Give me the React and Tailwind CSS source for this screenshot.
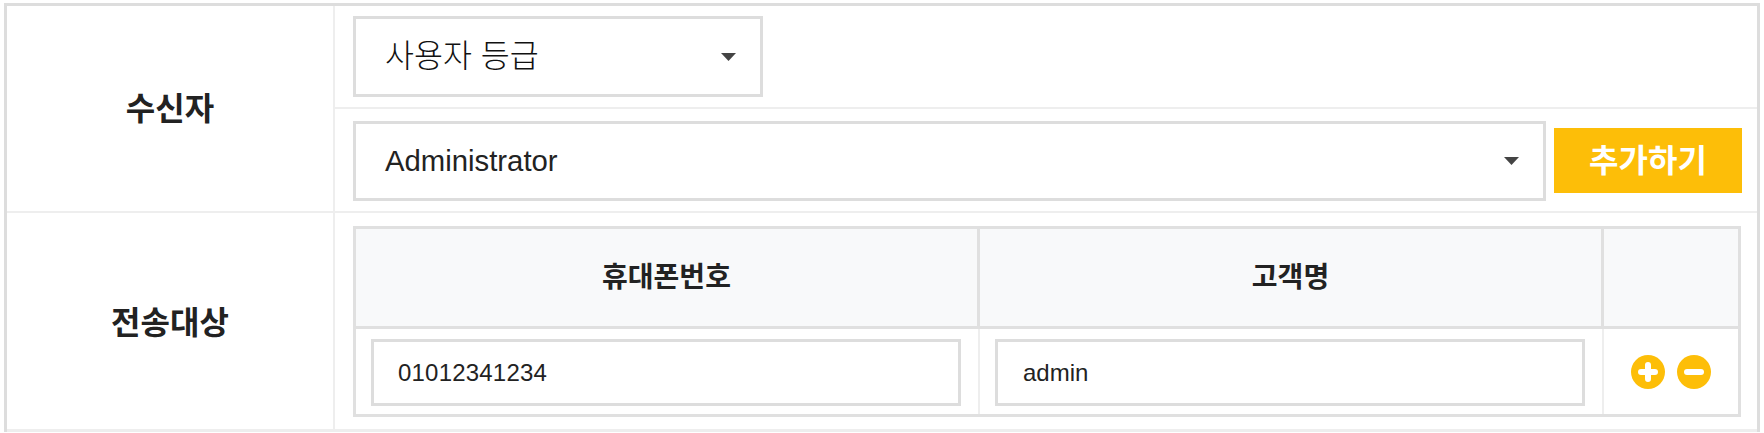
const FONT = { fontFamily: '"Liberation Sans", "Noto Sans CJK KR", sans-serif' };

function Caret() {
  return (
    <svg width="15" height="8" viewBox="0 0 15 8" className="shrink-0">
      <path d="M0 0h15L7.5 8z" fill="#444" />
    </svg>
  );
}

function SelectBox({ value, className, caretPos }) {
  return (
    <div className={`flex items-center justify-between border-[3px] border-[#ddd] bg-white pl-[29px] ${caretPos} ${className}`}>
      <span>{value}</span>
      <Caret />
    </div>
  );
}

function RowLabel({ children, className }) {
  return (
    <div className={`box-content flex w-[326px] shrink-0 items-center justify-center border-r-2 border-[#eee] text-[32px] font-bold text-[#222] ${className}`}>
      {children}
    </div>
  );
}

function Field({ defaultValue, className, pad }) {
  return (
    <input
      readOnly
      defaultValue={defaultValue}
      className={`h-[67px] border-[3px] border-[#ddd] bg-white text-[24px] text-[#222] outline-none ${pad} ${className}`}
    />
  );
}

export default function App() {
  return (
    <div className="h-[433px] w-[1764px] overflow-hidden bg-white pl-[4px] pt-[3px]" style={FONT}>
      <div className="w-[1756px] border-x-[3px] border-t-[3px] border-[#ddd]">
        <div className="flex border-b-[2px] border-[#eee]">
          <RowLabel>수신자</RowLabel>
          <div className="flex-1">
            <div className="flex h-[103px] border-b-[2px] border-[#eee] pl-[18px] pt-[10px]">
              <SelectBox value="사용자 등급" className="h-[81px] w-[410px] text-[31.5px] font-light text-[#111]" caretPos="pr-[24px]" />
            </div>
            <div className="flex h-[102px] items-start gap-[8px] pl-[18px] pt-[12px]">
              <SelectBox value="Administrator" className="h-[80px] w-[1193px] text-[29.3px] text-[#222]" caretPos="pr-[24px]" />
              <button className="mt-[7px] h-[65px] w-[188px] bg-[#fdbe08] text-[32px] font-bold text-white">추가하기</button>
            </div>
          </div>
        </div>

        <div className="flex h-[219px] border-b-[3px] border-[#eee]">
          <RowLabel className="pt-[4px]">전송대상</RowLabel>
          <div className="flex-1 pl-[18px] pt-[13px]">
            <div className="grid h-[191px] w-[1388px] grid-cols-[624px_624px_1fr] grid-rows-[100px_1fr] border-[3px] border-[#e0e0e0]">
              <div className="flex items-center justify-center border-b-[3px] border-r-[3px] border-[#e0e0e0] bg-[#f8f9fa] text-[28px] font-bold text-[#222]">휴대폰번호</div>
              <div className="flex items-center justify-center border-b-[3px] border-r-[3px] border-[#e0e0e0] bg-[#f8f9fa] text-[28px] font-bold text-[#222]">고객명</div>
              <div className="border-b-[3px] border-[#e0e0e0] bg-[#f8f9fa]" />
              <div className="flex items-start border-r-[2px] border-[#eee] pl-[15px] pt-[10px]">
                <Field defaultValue="01012341234" className="w-[590px] tracking-[0.2px]" pad="pl-[24px]" />
              </div>
              <div className="flex items-start border-r-[2px] border-[#eee] pl-[15px] pt-[10px]">
                <Field defaultValue="admin" className="w-[590px]" pad="pl-[25px]" />
              </div>
              <div className="flex items-center gap-[12px] pl-[27px]">
                <svg width="34" height="34" viewBox="0 0 34 34">
                  <circle cx="17" cy="17" r="17" fill="#fdbe08" />
                  <path d="M17 10v14M10 17h14" stroke="#fff" strokeWidth="6" strokeLinecap="round" />
                </svg>
                <svg width="34" height="34" viewBox="0 0 34 34">
                  <circle cx="17" cy="17" r="17" fill="#fdbe08" />
                  <path d="M10 17h14" stroke="#fff" strokeWidth="6" strokeLinecap="round" />
                </svg>
              </div>
            </div>
          </div>
        </div>
      </div>
    </div>
  );
}
